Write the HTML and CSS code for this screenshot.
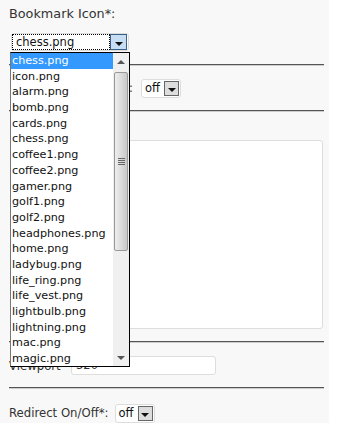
FILE: index.html
```html
<!DOCTYPE html>
<html lang="en">
<head>
  <meta charset="UTF-8">
  <meta name="viewport" content="width=device-width, initial-scale=1.0">
  <title>Bookmark Settings</title>
  <link rel="stylesheet" href="styles.css">
</head>
<body>

  <div class="panel">
    <div class="field field-icon">
      <label class="label label-top">Bookmark Icon*:</label>
      <div class="select select-wide">
        <span class="select-value focused">chess.png</span>
        <span class="select-btn active"><span class="arrow"></span></span>
      </div>
    </div>

    <hr class="rule">

    <div class="field field-row field-fullscreen">
      <label class="label">Fullscreen On/Off*:</label>
      <div class="select select-small">
        <span class="select-value">off</span>
        <span class="select-btn"><span class="arrow"></span></span>
      </div>
    </div>

    <hr class="rule">

    <div class="field field-text">
      <div class="textarea"></div>
    </div>

    <hr class="rule">

    <div class="field field-row field-viewport">
      <label class="label">Viewport</label>
      <div class="input">320</div>
    </div>

    <hr class="rule">

    <div class="field field-row field-redirect">
      <label class="label">Redirect On/Off*:</label>
      <div class="select select-small">
        <span class="select-value">off</span>
        <span class="select-btn"><span class="arrow"></span></span>
      </div>
    </div>
  </div>

  <div class="dropdown">
    <ul class="options">
      <li class="selected">chess.png</li>
      <li>icon.png</li>
      <li>alarm.png</li>
      <li>bomb.png</li>
      <li>cards.png</li>
      <li>chess.png</li>
      <li>coffee1.png</li>
      <li>coffee2.png</li>
      <li>gamer.png</li>
      <li>golf1.png</li>
      <li>golf2.png</li>
      <li>headphones.png</li>
      <li>home.png</li>
      <li>ladybug.png</li>
      <li>life_ring.png</li>
      <li>life_vest.png</li>
      <li>lightbulb.png</li>
      <li>lightning.png</li>
      <li>mac.png</li>
      <li>magic.png</li>
    </ul>
    <div class="scrollbar">
      <div class="sb-btn"><span class="sb-up"></span></div>
      <div class="sb-track">
        <div class="sb-thumb"><span class="grip"></span></div>
      </div>
      <div class="sb-btn sb-btn-down"><span class="sb-down"></span></div>
    </div>
  </div>

</body>
</html>
```

FILE: styles.css
```css
body {
  margin: 0;
  background: #fff;
  font-family: "DejaVu Sans", Verdana, sans-serif;
  color: #333;
}
.panel {
  width: 329px;
  height: 423px;
  box-sizing: border-box;
  background: #f8f8f8;
  padding: 6px 5px 0 9px;
}
.label {
  font-size: 11.7px;
  white-space: nowrap;
}
.label-top {
  display: block;
  font-size: 12.8px;
  line-height: 16px;
  margin-bottom: 11px;
}
.rule {
  margin: 0;
  border: 0;
  border-top: 1px solid #555;
  border-bottom: 1px solid #ccc;
}
.field-icon {
  height: 58px;
}
.field-row {
  display: flex;
  align-items: center;
  gap: 8px;
}
.field-fullscreen {
  height: 44px;
}
.field-fullscreen .label {
  width: 124px;
  text-align: right;
  overflow: hidden;
}
.field-text {
  height: 229px;
  padding-top: 28px;
  box-sizing: border-box;
}
.field-viewport {
  height: 44px;
  gap: 0;
}
.field-viewport .label {
  width: 62px;
  padding-top: 2px;
}
.field-redirect {
  height: 40px;
  padding-top: 8px;
  box-sizing: border-box;
  gap: 6px;
}
.select {
  display: flex;
  align-items: center;
  background: #fff;
  border: 1px solid #ddd;
  border-radius: 3px;
  height: 19px;
  box-sizing: border-box;
  font-size: 11.5px;
  color: #111;
}
.select-wide {
  width: 118px;
  margin-left: 2px;
  height: 18px;
}
.select-small {
  width: 40px;
}
.select-value {
  flex: 1;
  padding-left: 3px;
  line-height: 15px;
}
.select-value.focused {
  padding-left: 3px;
  border: 1px dotted #000;
  box-sizing: border-box;
  height: 16px;
}
.select-btn {
  width: 15px;
  height: 15px;
  box-sizing: border-box;
  border: 1px solid #666;
  background: #ddd;
  display: flex;
  align-items: flex-end;
  justify-content: center;
  padding-bottom: 3px;
  margin-right: 1px;
}
.select-btn.active {
  width: 17px;
  height: 16px;
  background: #c6ddf3;
  border-color: #3c5f86;
}
.arrow {
  width: 0;
  height: 0;
  border-left: 4px solid transparent;
  border-right: 4px solid transparent;
  border-top: 4px solid #111;
}
.textarea {
  width: 312px;
  height: 189px;
  margin-left: 2px;
  background: #fff;
  border: 1px solid #ddd;
  border-radius: 3px;
  box-sizing: border-box;
}
.input {
  width: 145px;
  height: 19px;
  box-sizing: border-box;
  background: #fff;
  border: 1px solid #ddd;
  border-radius: 3px;
  font-size: 11.5px;
  color: #333;
  padding-left: 4px;
  line-height: 17px;
}
.dropdown {
  position: absolute;
  left: 10px;
  top: 52px;
  width: 120px;
  height: 315px;
  box-sizing: border-box;
  background: #fff;
  border: 1px solid #000;
  border-left-color: #777;
  display: flex;
}
.options {
  list-style: none;
  margin: 0;
  padding: 0;
  flex: 1;
  font-size: 11.2px;
  color: #111;
}
.options li {
  height: 15.7px;
  line-height: 15px;
  padding-left: 1px;
  white-space: nowrap;
}
.options li.selected {
  background: #3399ff;
  color: #fff;
}
.scrollbar {
  width: 16px;
  background: #f0f0f0;
  display: flex;
  flex-direction: column;
}
.sb-btn {
  height: 17px;
  display: flex;
  align-items: center;
  justify-content: center;
}
.sb-up {
  border-left: 4px solid transparent;
  border-right: 4px solid transparent;
  border-bottom: 4px solid #555;
}
.sb-down {
  border-left: 4px solid transparent;
  border-right: 4px solid transparent;
  border-top: 4px solid #555;
}
.sb-track {
  flex: 1;
  padding-top: 2px;
}
.sb-thumb {
  height: 179px;
  margin: 0 1px;
  box-sizing: border-box;
  border: 1px solid #999;
  border-radius: 2px;
  background: linear-gradient(to right, #eee, #dcdcdc 50%, #c8c8c8);
  display: flex;
  align-items: center;
  justify-content: center;
}
.grip {
  width: 7px;
  height: 7px;
  background: repeating-linear-gradient(to bottom, #666 0, #666 1px, transparent 1px, transparent 2px);
}
```
